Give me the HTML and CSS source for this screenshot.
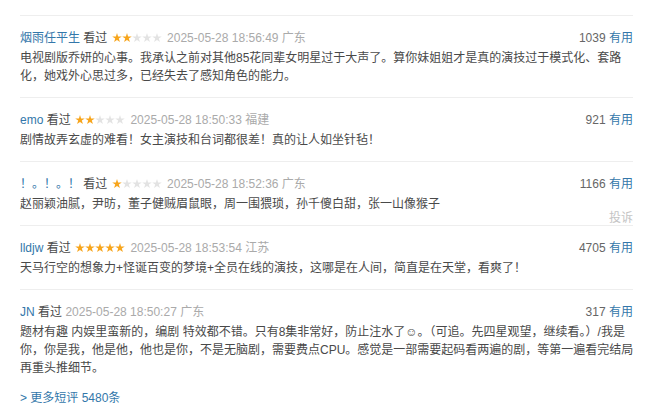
FILE: index.html
```html
<!DOCTYPE html>
<html lang="zh-CN">
<head>
<meta charset="utf-8">
<link rel="stylesheet" href="styles.css">
</head>
<body>
<svg class="defs" width="0" height="0" aria-hidden="true">
  <defs>
    <path id="star" d="M5 0 L6.12 3.45 L9.76 3.45 L6.82 5.59 L7.94 9.05 L5 6.91 L2.06 9.05 L3.18 5.59 L0.24 3.45 L3.88 3.45 Z"/>
  </defs>
</svg>
<div class="comments">
  <div class="item">
    <div class="head">
      <span class="info"><a class="user">烟雨任平生</a> <span class="watched">看过</span> <svg class="stars" width="50" height="10" viewBox="0 0 50 10"><use href="#star" x="0" fill="#f7a51c"/><use href="#star" x="10" fill="#f7a51c"/><use href="#star" x="20" fill="#e3e3e3"/><use href="#star" x="30" fill="#e3e3e3"/><use href="#star" x="40" fill="#e3e3e3"/></svg> <span class="time">2025-05-28 18:56:49</span> <span class="loc">广东</span></span>
      <span class="votes"><span class="count">1039</span> <a class="useful">有用</a></span>
    </div>
    <p class="short">电视剧版乔妍的心事。我承认之前对其他85花同辈女明星过于大声了。算你妹姐姐才是真的演技过于模式化、套路化，她戏外心思过多，已经失去了感知角色的能力。</p>
  </div>
  <div class="item">
    <div class="head">
      <span class="info"><a class="user">emo</a> <span class="watched">看过</span> <svg class="stars" width="50" height="10" viewBox="0 0 50 10"><use href="#star" x="0" fill="#f7a51c"/><use href="#star" x="10" fill="#f7a51c"/><use href="#star" x="20" fill="#e3e3e3"/><use href="#star" x="30" fill="#e3e3e3"/><use href="#star" x="40" fill="#e3e3e3"/></svg> <span class="time">2025-05-28 18:50:33</span> <span class="loc">福建</span></span>
      <span class="votes"><span class="count">921</span> <a class="useful">有用</a></span>
    </div>
    <p class="short">剧情故弄玄虚的难看！女主演技和台词都很差！真的让人如坐针毡！</p>
  </div>
  <div class="item">
    <div class="head">
      <span class="info"><a class="user">！。！。！</a> <span class="watched">看过</span> <svg class="stars" width="50" height="10" viewBox="0 0 50 10"><use href="#star" x="0" fill="#f7a51c"/><use href="#star" x="10" fill="#e3e3e3"/><use href="#star" x="20" fill="#e3e3e3"/><use href="#star" x="30" fill="#e3e3e3"/><use href="#star" x="40" fill="#e3e3e3"/></svg> <span class="time">2025-05-28 18:52:36</span> <span class="loc">广东</span></span>
      <span class="votes"><span class="count">1166</span> <a class="useful">有用</a></span>
    </div>
    <p class="short">赵丽颖油腻，尹昉，董子健贼眉鼠眼，周一围猥琐，孙千傻白甜，张一山像猴子</p>
    <a class="report">投诉</a>
  </div>
  <div class="item">
    <div class="head">
      <span class="info"><a class="user">lldjw</a> <span class="watched">看过</span> <svg class="stars" width="50" height="10" viewBox="0 0 50 10"><use href="#star" x="0" fill="#f7a51c"/><use href="#star" x="10" fill="#f7a51c"/><use href="#star" x="20" fill="#f7a51c"/><use href="#star" x="30" fill="#f7a51c"/><use href="#star" x="40" fill="#f7a51c"/></svg> <span class="time">2025-05-28 18:53:54</span> <span class="loc">江苏</span></span>
      <span class="votes"><span class="count">4705</span> <a class="useful">有用</a></span>
    </div>
    <p class="short">天马行空的想象力+怪诞百变的梦境+全员在线的演技，这哪是在人间，简直是在天堂，看爽了！</p>
  </div>
  <div class="item last">
    <div class="head">
      <span class="info"><a class="user">JN</a> <span class="watched">看过</span> <span class="time">2025-05-28 18:50:27</span> <span class="loc">广东</span></span>
      <span class="votes"><span class="count">317</span> <a class="useful">有用</a></span>
    </div>
    <p class="short">题材有趣 内娱里蛮新的，编剧 特效都不错。只有8集非常好，防止注水了☺。（可追。先四星观望，继续看。）/我是你，你是我，他是他，他也是你，不是无脑剧，需要费点CPU。感觉是一部需要起码看两遍的剧，等第一遍看完结局再重头推细节。</p>
  </div>
  <a class="more">&gt; 更多短评 5480条</a>
</div>
</body>
</html>
```
FILE: styles.css
```css
html, body {
  margin: 0;
  padding: 0;
  background: #fff;
}
body {
  font-family: "Liberation Sans", Arial, "Noto Sans CJK SC", sans-serif;
  font-size: 12px;
  color: #494949;
}
.defs {
  position: absolute;
  width: 0;
  height: 0;
  overflow: hidden;
}
.comments {
  width: 613px;
  padding: 15px 0 0 20px;
}
.item {
  position: relative;
  border-top: 1px solid #eeeeee;
  padding: 13px 0 12px;
}
.head {
  display: flex;
  justify-content: space-between;
  line-height: 18px;
  white-space: nowrap;
}
.user {
  color: #3377aa;
}
.watched {
  color: #494949;
}
.stars {
  vertical-align: -1px;
  margin: 0 2px 0 1px;
}
.time, .loc {
  color: #aaaaaa;
}
.count {
  color: #666666;
}
.useful {
  color: #3377aa;
}
.short {
  margin: 2px -9px 0 0;
  line-height: 18px;
  color: #494949;
}
.report {
  position: absolute;
  right: 0;
  bottom: 0;
  line-height: 14px;
  color: #c4c4c4;
}
.more {
  display: block;
  line-height: 18px;
  color: #3377aa;
}
```
